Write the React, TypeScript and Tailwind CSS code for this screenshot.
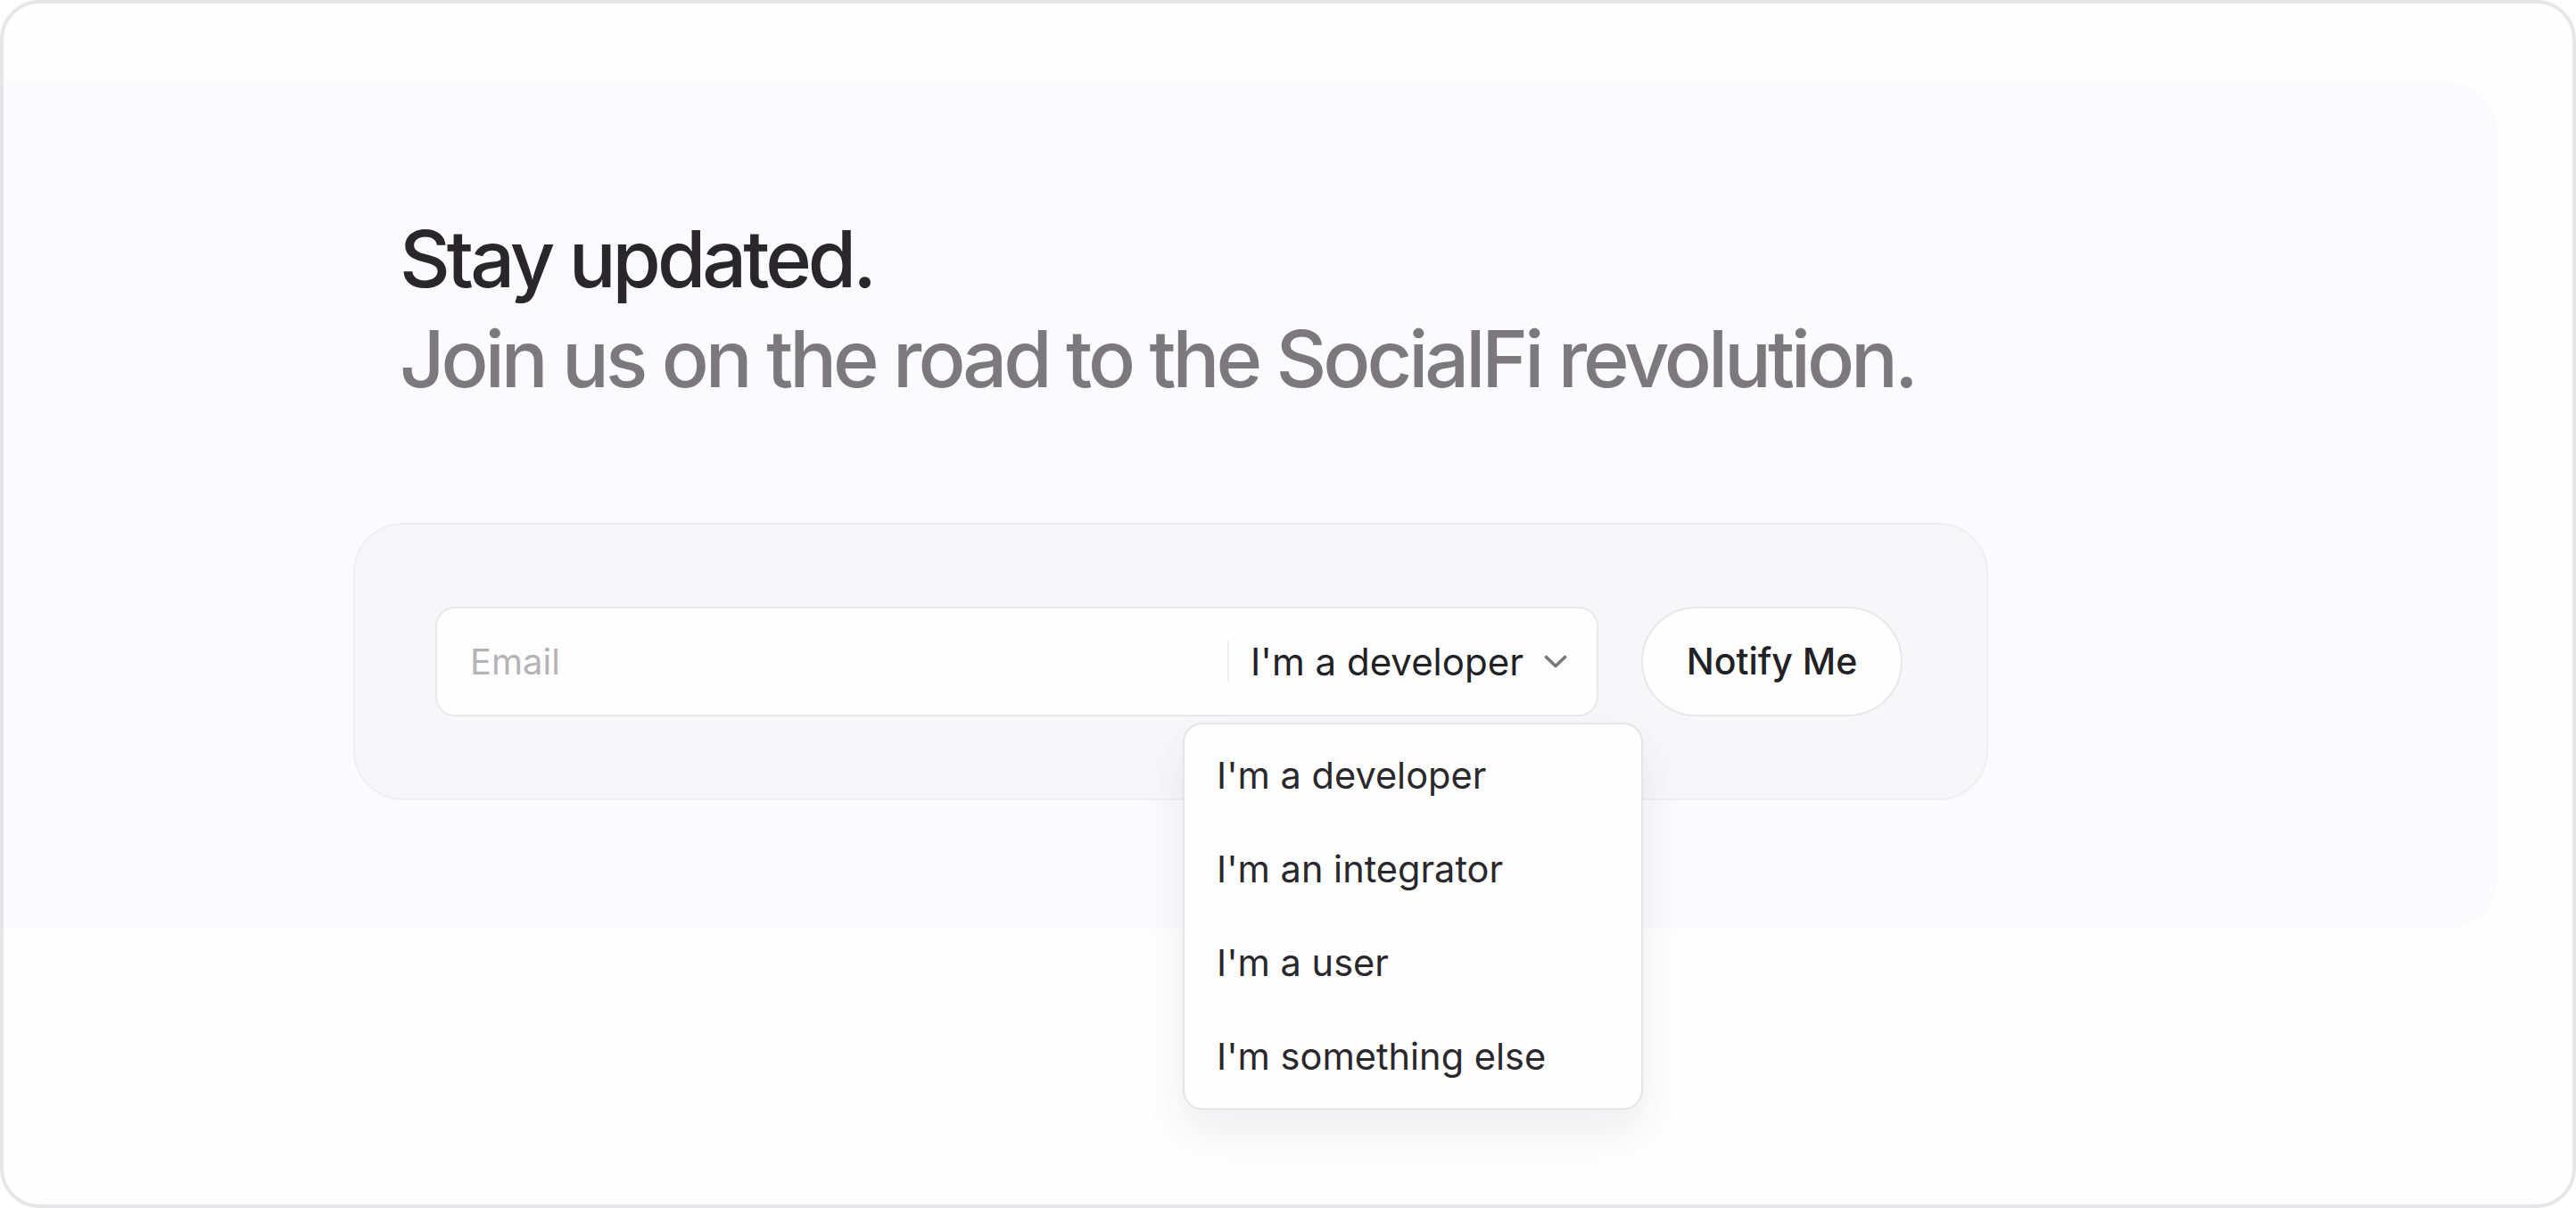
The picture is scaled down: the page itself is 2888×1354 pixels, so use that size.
import React from "react";

const options = ["I'm a developer", "I'm an integrator", "I'm a user", "I'm something else"];

export default function App() {
  return (
    <div className="w-[2888px] h-[1354px] bg-white font-['Inter','Liberation_Sans',sans-serif]">
      <div className="w-full h-full rounded-[44px] border-4 border-[#e6e5e8] bg-[#fefefe] overflow-hidden pt-[88px]">
        <section className="w-[2796px] h-[949px] rounded-r-[56px] bg-[#fbfafc] pt-[142px] pl-[392px]">
          <div className="ml-[52px] text-[88px] leading-[112px] font-medium tracking-[-0.046em]">
            <h2 className="text-[#29272c]">Stay updated.</h2>
            <p className="text-[#7b797e]">Join us on the road to the SocialFi revolution.</p>
          </div>

          <div className="mt-[128px] w-[1833px] h-[311px] rounded-[56px] border-2 border-[#efeef1] bg-[#f7f6f8] pl-[90px] pr-[94px] flex items-center gap-[48px]">
            <div className="relative w-[1304px] h-[123px]">
              <div className="w-full h-full rounded-[22px] border-2 border-[#e8e7ea] bg-[#fefefe] flex items-center">
                <span className="flex-1 pl-[37px] text-[40px] text-[#b5b3b8]">Email</span>
                <div className="w-[2px] h-[47px] bg-[#f0eff2]" />
                <div className="flex items-center pl-[24px] pr-[33px] gap-[23px]">
                  <span className="text-[42px] text-[#222126]">I'm a developer</span>
                  <svg width="26" height="15" viewBox="0 0 26 15" fill="none">
                    <polyline points="2.5,2.5 13,12.5 23.5,2.5" stroke="#78767b" strokeWidth="3.6" strokeLinecap="round" strokeLinejoin="round" />
                  </svg>
                </div>
              </div>

              <div className="absolute left-[838px] top-[130px] w-[516px] rounded-[22px] border-2 border-[#e5e4e7] bg-[#fefefe] py-[5px] shadow-[0_24px_50px_rgba(30,20,40,0.07)] z-10">
                {options.map((o) => (
                  <div key={o} className="h-[105px] flex items-center pl-[36px] text-[41.5px] text-[#2a282d]">
                    {o}
                  </div>
                ))}
              </div>
            </div>

            <button className="w-[293px] h-[123px] rounded-full border-2 border-[#e8e7ea] bg-[#fefefe] text-[41px] font-medium text-[#222126]">
              Notify Me
            </button>
          </div>
        </section>
      </div>
    </div>
  );
}
